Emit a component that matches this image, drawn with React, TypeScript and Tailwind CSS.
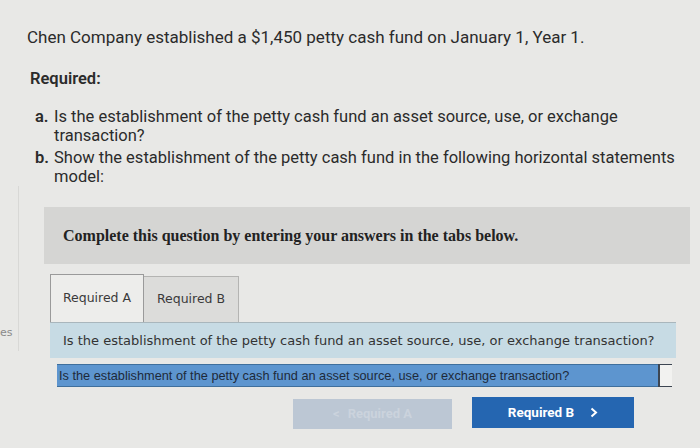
import React from 'react'

const App: React.FC = () => {
  return (
    <div className="relative w-[700px] h-[448px] overflow-hidden bg-[#e8e8e6] text-[#2b2b2b]">
      {/* cropped side panel at the left edge */}
      <div className="absolute left-0 top-[186px] w-[19px] h-[165px] border-r border-[#d8d8d6]">
        <span className="absolute left-0 top-[141px] text-[11px] leading-none text-[#8a8a8a] font-['DejaVu_Sans',sans-serif]">es</span>
      </div>

      <div className="pl-[27px] pt-[27px] font-['Roboto',sans-serif]">
        <p className="text-[17px] leading-[20px]">
          Chen Company established a $1,450 petty cash fund on January 1, Year 1.
        </p>

        <p className="mt-[22px] ml-[3px] text-[16.5px] leading-[20px] font-semibold">Required:</p>

        <ol className="mt-[18px] ml-[8px] text-[16.5px] leading-[19px] space-y-[3px]">
          <li className="flex">
            <span className="w-[19px] shrink-0 font-semibold">a.</span>
            <span>
              Is the establishment of the petty cash fund an asset source, use, or exchange
              <br />
              transaction?
            </span>
          </li>
          <li className="flex">
            <span className="w-[19px] shrink-0 font-semibold">b.</span>
            <span>
              Show the establishment of the petty cash fund in the following horizontal statements
              <br />
              model:
            </span>
          </li>
        </ol>
      </div>

      {/* instruction box */}
      <div className="ml-[44px] mt-[21px] w-[646px] h-[57px] bg-[#d5d5d3] flex items-center pl-[19px]">
        <p className="text-[16px] font-bold text-[#222] font-['Liberation_Serif',serif]">
          Complete this question by entering your answers in the tabs below.
        </p>
      </div>

      {/* tabs */}
      <div className="ml-[50px] mt-[10px] w-[626px] font-['DejaVu_Sans',sans-serif]">
        <div className="flex items-end">
          <div className="w-[94px] h-[48px] bg-[#ededeb] border border-b-0 border-[#9a9a9a] flex items-center justify-center text-[12.5px] text-[#3a3a3a]">
            Required A
          </div>
          <div className="w-[95px] h-[46px] bg-[#dcdcda] border border-l-0 border-b-0 border-[#b4b4b2] flex items-center justify-center text-[12.5px] text-[#3a3a3a]">
            Required B
          </div>
        </div>
        <div className="h-[36px] bg-[#c7dbe4] border-t border-[#a9b6bc] flex items-center pl-[13px] text-[13px] text-[#333]">
          Is the establishment of the petty cash fund an asset source, use, or exchange transaction?
        </div>
      </div>

      {/* answer dropdown */}
      <div className="ml-[57px] mt-[6px] w-[615px] h-[23px] flex">
        <div className="flex-1 bg-[#5d95cf] border-y border-[#3f6f9c] flex items-center pl-[2px] text-[12.75px] text-[#1d2a3a] font-['Liberation_Sans',sans-serif]">
          Is the establishment of the petty cash fund an asset source, use, or exchange transaction?
        </div>
        <div className="w-[14px] bg-[#f2f2f0] border-l-2 border-y border-[#3d4652]" />
      </div>

      {/* navigation buttons */}
      <div className="mt-[10px] ml-[293px] flex items-start gap-[20px] font-['Roboto',sans-serif]">
        <button className="mt-[2px] w-[159px] h-[30px] bg-[#bcc7d4] flex items-center justify-center gap-[8px] text-[13px] font-bold text-[#cbd3dd]">
          <span>&lt;</span>
          <span>Required A</span>
        </button>
        <button className="w-[162px] h-[31px] bg-[#2566b1] flex items-center justify-center gap-[16px] text-[13.5px] font-bold text-white">
          <span>Required B</span>
          <svg width="8" height="11" viewBox="0 0 8 11" fill="none">
            <path d="M1.5 1.5L6 5.5L1.5 9.5" stroke="white" strokeWidth="2" />
          </svg>
        </button>
      </div>
    </div>
  )
}

export default App
